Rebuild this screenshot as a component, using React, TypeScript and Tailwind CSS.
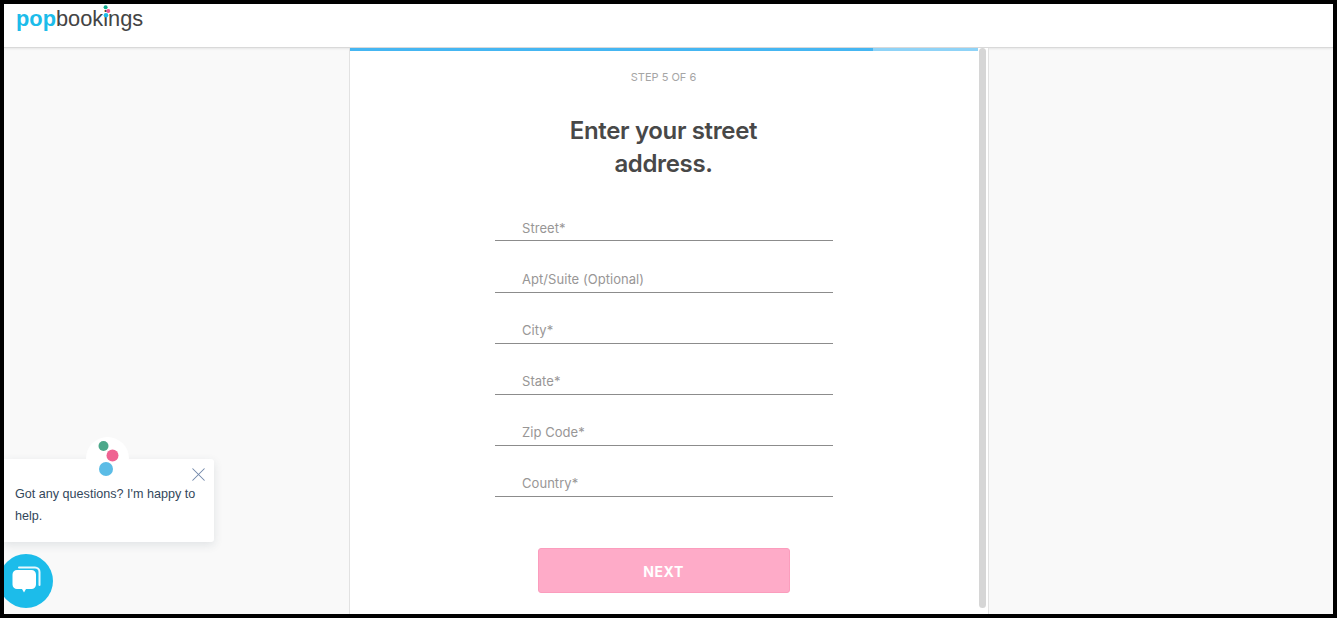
import { X } from 'lucide-react';

const FIELDS = ['Street*', 'Apt/Suite (Optional)', 'City*', 'State*', 'Zip Code*', 'Country*'];

function Logo() {
  return (
    <div className="relative ml-3 h-[30px] text-[21.8px] leading-[30px] font-['Liberation_Sans',sans-serif] text-[#444]">
      <span className="font-bold text-[#1cbcea]">pop</span>
      <span>bookings</span>
      <svg className="absolute left-[86px] top-0" width="12" height="18" viewBox="0 0 12 18">
        <circle cx="3.6" cy="3.3" r="2" fill="#0eaa8e" />
        <circle cx="6.3" cy="7" r="2" fill="#f0588f" />
        <circle cx="4" cy="11.3" r="2.3" fill="#1cbcea" />
      </svg>
    </div>
  );
}

function ChatWidget() {
  return (
    <>
      <div className="absolute left-0 top-[455px] h-[83px] w-[210px] rounded-r-[3px] bg-white px-[11px] pt-[24px] text-[12.6px] leading-[22px] text-[#33475b] shadow-[0_3px_10px_rgba(45,62,80,0.12)] font-['Liberation_Sans',sans-serif]">
        <div className="absolute left-[82px] top-[-22px] h-[43px] w-[43px] rounded-full bg-white">
          <svg width="43" height="43" viewBox="0 0 43 43">
            <circle cx="17.5" cy="9" r="5" fill="#4ca88a" />
            <circle cx="26.5" cy="18.5" r="6" fill="#ef6392" />
            <circle cx="20" cy="32" r="7" fill="#5bbce6" />
          </svg>
        </div>
        <X className="absolute right-[4px] top-[3.500px] text-[#6f86a8]" size={23} strokeWidth={1.1} />
        <p>Got any questions? I'm happy to help.</p>
      </div>
      <div className="absolute left-[-5px] top-[550px] flex h-[54px] w-[54px] items-center justify-center rounded-full bg-[#1cbcea]">
        <svg width="30" height="30" viewBox="0 0 30 30">
          <path d="M8 1.5h16a4.5 4.5 0 0 1 4.5 4.5v13" fill="none" stroke="#e8f8fd" strokeWidth="2" strokeLinecap="round" />
          <path
            d="M6 4h14.5a4.5 4.5 0 0 1 4.5 4.5v10a4.5 4.5 0 0 1-4.5 4.5h-5.5l-2 3.5-2-3.500h-5a4.500 4.500 0 0 1-4.500-4.500v-10a4.500 4.500 0 0 1 4.500-4.500z"
            fill="#fff"
          />
        </svg>
      </div>
    </>
  );
}

export default function App() {
  return (
    <div className="relative flex h-[618px] w-[1337px] flex-col overflow-hidden border-4 border-black bg-[#f9f9f9] font-['Inter',sans-serif]">
      <header className="flex h-[44px] shrink-0 items-start border-b border-[#d9d9d9] bg-white shadow-[0_1px_2px_rgba(0,0,0,0.08)]">
        <Logo />
      </header>
      <main className="flex min-h-0 flex-1 justify-center">
        <div className="flex w-[640px] border-x border-[#e2e2e2] bg-white">
          <div className="flex flex-1 flex-col items-center">
            <div className="flex h-[3px] w-full shrink-0 bg-[#8fd3f7]">
              <div className="h-full w-[523px] bg-[#45b6f2]" />
            </div>
            <p className="mt-[19px] text-[11px] leading-[14px] text-[#a5a5a5]">STEP 5 OF 6</p>
            <h1 className="mt-[30px] w-[260px] text-center text-[24px] leading-[33px] font-semibold tracking-[-0.35px] text-[#484848]">
              Enter your street address.
            </h1>
            <form className="mt-[29.35px] flex w-[338px] flex-col gap-[19px]">
              {FIELDS.map((label) => (
                <div
                  key={label}
                  className="h-[32.1px] border-b border-[#8c8c8c] pl-[27.5px] pt-[8.4px] text-[13px] leading-[20px] tracking-[0.05px] text-[#989696]"
                >
                  {label}
                </div>
              ))}
            </form>
            <button className="mt-[51.1px] flex h-[45px] w-[252px] shrink-0 items-center justify-center rounded-[3px] border border-[#fb9dbd] bg-[#feabc8] pt-[2px] text-[14px] font-bold tracking-[0.6px] text-white">
              NEXT
            </button>
          </div>
          <div className="mb-[6px] ml-px w-[7px] shrink-0 rounded-full bg-[#d6d6d6]" />
          <div className="w-[2px] shrink-0" />
        </div>
      </main>
      <ChatWidget />
    </div>
  );
}
